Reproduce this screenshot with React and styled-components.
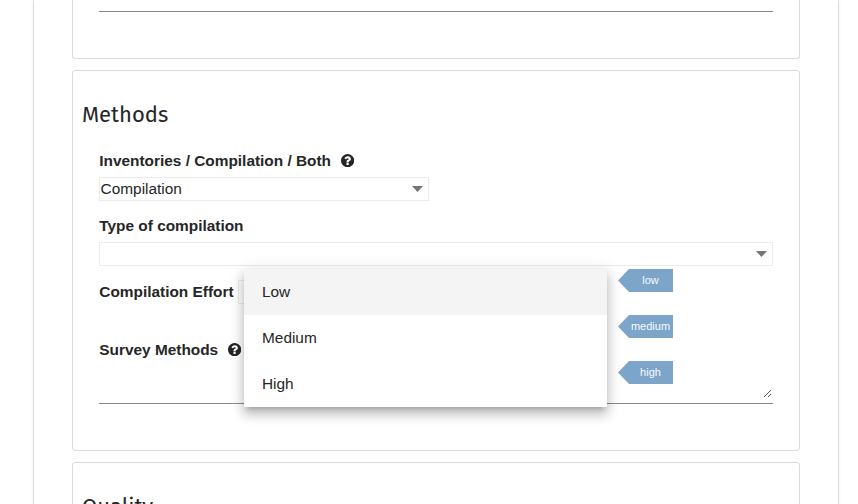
import React from "react";
import styled, { createGlobalStyle } from "styled-components";

const GlobalStyle = createGlobalStyle`
  *, *::before, *::after { box-sizing: border-box; }
  body {
    margin: 0;
    overflow: hidden;
    background: #fff;
    color: #262626;
    font-family: "Liberation Sans", Arial, sans-serif;
    font-size: 15.4px;
  }
`;

const Page = styled.div`
  height: 504px;
  overflow: hidden;
  padding: 0 19px 0 34px;
`;

const Sheet = styled.main`
  position: relative;
  width: 804px;
  height: 504px;
  padding: 0 38px;
  display: flex;
  flex-direction: column;
  gap: 11px;
  background: #fff;
  box-shadow: 0 0 0 1px rgba(0, 0, 0, 0.08), 0 1px 4px rgba(0, 0, 0, 0.12);
`;

const Panel = styled.section`
  flex: none;
  height: ${(p) => p.$height}px;
  border: 1px solid #dbdbdb;
  border-top-width: ${(p) => (p.$continued ? 0 : 1)}px;
  border-radius: ${(p) => (p.$continued ? "0 0 3px 3px" : "3px")};
  padding: ${(p) => (p.$continued ? 0 : 29)}px 26px 0;
`;

const Title = styled.h2`
  margin: 0 0 20px -17px;
  height: 30px;
  line-height: 30px;
  font-family: "Fira Sans", "Noto Sans", sans-serif;
  font-size: 22px;
  font-weight: 400;
`;

const Label = styled.label`
  display: flex;
  align-items: center;
  gap: 10px;
  height: 21px;
  padding-left: 0.3px;
  font-weight: 700;
  white-space: nowrap;
`;

const HelpIcon = styled.svg`
  width: 13.2px;
  height: 13.2px;
  fill: currentColor;
`;

const Field = styled.div`
  margin-bottom: 14px;
`;

const Select = styled.div`
  display: flex;
  align-items: center;
  justify-content: space-between;
  width: ${(p) => p.$width};
  height: 24px;
  margin-top: ${(p) => (p.$inline ? 0 : 6)}px;
  padding: 0 5px 0 0.6px;
  border: 1px solid #ebebeb;
  line-height: 20px;
`;

const SelectValue = styled.span`
  padding-bottom: 1px;
`;

const CaretIcon = styled.svg`
  width: 11px;
  height: 6px;
  margin-left: auto;
  fill: #757575;
`;

const InlineField = styled.div`
  display: flex;
  align-items: center;
  gap: 4.4px;
  height: 24px;
  margin-bottom: 35px;
`;

const InlineLabel = styled(Label)`
  height: 24px;
  line-height: 18px;
  padding-bottom: 1px;
`;

const TextArea = styled.div`
  display: flex;
  align-items: flex-end;
  justify-content: flex-end;
  height: ${(p) => p.$height}px;
  padding: 0 2px 6px 0;
  border-bottom: 1px solid #898989;
`;

const Grip = styled.svg`
  width: 7px;
  height: 7px;
  fill: #555;
  shape-rendering: crispEdges;
`;

const Menu = styled.ul`
  position: absolute;
  top: 269px;
  left: 210px;
  width: 363px;
  margin: 0;
  padding: 0;
  list-style: none;
  background: #fff;
  box-shadow: 0 5px 5px -3px rgba(0, 0, 0, 0.2),
    0 8px 10px 1px rgba(0, 0, 0, 0.14), 0 3px 14px 2px rgba(0, 0, 0, 0.12);
`;

const Option = styled.li`
  height: 46px;
  padding-left: 18px;
  line-height: 46px;
  background: ${(p) => (p.$active ? "#f4f4f4" : "#fff")};
`;

const Tags = styled.div`
  position: absolute;
  top: 269px;
  left: 584px;
  display: flex;
  flex-direction: column;
  gap: 23px;
`;

const Tag = styled.span`
  width: 55px;
  height: 23px;
  padding-left: 10px;
  background: #7da5ca;
  clip-path: polygon(0 50%, 11px 0, 100% 0, 100% 100%, 11px 100%);
  color: #f8fbff;
  font-size: 11px;
  line-height: 23px;
  text-align: center;
`;

const levels = ["Low", "Medium", "High"];

function Help() {
  return (
    <HelpIcon viewBox="128 128 1536 1536" aria-label="Help">
      <path d="M1024 1376v-192q0-14-9-23t-23-9h-192q-14 0-23 9t-9 23v192q0 14 9 23t23 9h192q14 0 23-9t9-23zm256-672q0-88-55.5-163t-138.5-116-170-41q-243 0-371 213-15 24 8 42l132 100q7 6 19 6 16 0 25-12 53-68 86-92 34-24 86-24 48 0 85.5 26t37.5 59q0 38-20 61t-68 45q-63 28-115.5 86.5t-52.5 125.5v36q0 14 9 23t23 9h192q14 0 23-9t9-23q0-19 21.5-49.5t54.5-49.5q32-18 49-28.5t46-35 44.5-48 28-60.5 12.5-81zm384 192q0 209-103 385.5t-279.5 279.5-385.5 103-385.5-103-279.5-279.5-103-385.5 103-385.5 279.5-279.5 385.5-103 385.5 103 279.5 279.5 103 385.5z" />
    </HelpIcon>
  );
}

function Caret() {
  return (
    <CaretIcon viewBox="0 0 11 6">
      <path d="M0 0h11L5.5 6z" />
    </CaretIcon>
  );
}

export default function App() {
  return (
    <>
      <GlobalStyle />
      <Page>
        <Sheet>
          <Panel $height={59} $continued>
            <TextArea $height={12} />
          </Panel>
          <Panel $height={381}>
            <Title>Methods</Title>
            <Field>
              <Label>Inventories / Compilation / Both <Help /></Label>
              <Select $width="330px"><SelectValue>Compilation</SelectValue><Caret /></Select>
            </Field>
            <Field>
              <Label>Type of compilation</Label>
              <Select $width="100%"><Caret /></Select>
            </Field>
            <InlineField>
              <InlineLabel>Compilation Effort</InlineLabel>
              <Select $width="330px" $inline><Caret /></Select>
            </InlineField>
            <Label>Survey Methods <Help /></Label>
            <TextArea $height={44}>
              <Grip viewBox="0 0 7 7">
                <path d="M0 6h1v1h-1zM1 5h1v1h-1zM2 4h1v1h-1zM3 3h1v1h-1zM4 2h1v1h-1zM5 1h1v1h-1zM6 0h1v1h-1zM4 6h1v1h-1zM5 5h1v1h-1zM6 4h1v1h-1z" />
              </Grip>
            </TextArea>
          </Panel>
          <Panel $height={300}>
            <Title>Quality</Title>
          </Panel>
          <Menu>
            {levels.map((level, i) => (
              <Option key={level} $active={i === 0}>{level}</Option>
            ))}
          </Menu>
          <Tags>
            {levels.map((level) => (
              <Tag key={level}>{level.toLowerCase()}</Tag>
            ))}
          </Tags>
        </Sheet>
      </Page>
    </>
  );
}
